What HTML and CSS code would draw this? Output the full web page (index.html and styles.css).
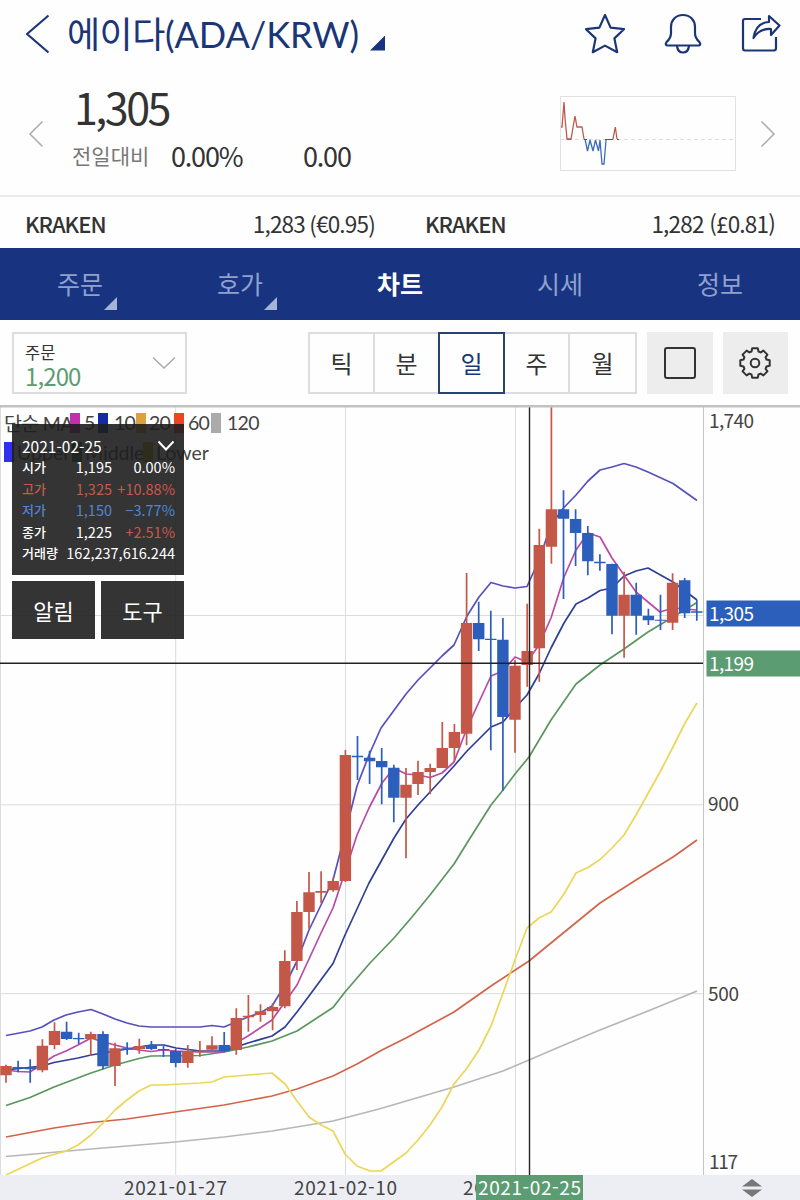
FILE: index.html
```html
<!DOCTYPE html>
<html lang="ko">
<head>
  <meta charset="UTF-8" />
  <meta name="viewport" content="width=device-width, initial-scale=1.0" />
  <title>에이다(ADA/KRW)</title>
  <link rel="stylesheet" href="styles.css">
</head>
<body>
  <header class="header">
    <svg class="back" width="26" height="40" viewBox="0 0 26 40"><path d="M23.500 1.500 L2 20 L23.500 38.500" /></svg>
    <h1>에이다<span class="pair">(ADA/KRW)</span></h1>
    <i class="corner"></i>
    <div class="header-icons">
      <svg width="42" height="42" viewBox="0 0 42 42"><path d="M21 2 L26.600 14.600 L40 16.200 L30.400 25.400 L33.200 39.200 L21 32.600 L8.800 39.200 L11.600 25.400 L2 16.200 L15.400 14.600 Z" /></svg>
      <svg width="42" height="42" viewBox="0 0 42 42"><path d="M21 2 C13.500 2 9 7.500 9 14 V20 C9 25 7 27 4.500 29.200 C3 31 4 32.500 5.500 32.500 H36.500 C38 32.500 39 31 37.500 29.200 C35 27 33 25 33 20 V14 C33 7.500 28.500 2 21 2 Z M15 33 C15.500 37 18 39.500 21 39.500 C24 39.500 26.500 37 27 33" /></svg>
      <svg width="42" height="42" viewBox="0 0 42 42"><path d="M21 6 H5 Q3 6 3 8 V35 Q3 37.500 5 37.500 H34 Q36 37.500 36 35 V24 M13.500 25 C15 15 20 9.500 29 9 V3 L39.500 12.500 L31 22 V16 C23 15.500 17.500 18.500 13.500 25 Z" /></svg>
    </div>
  </header>

  <section class="summary">
    <svg class="arrow" width="16" height="28" viewBox="0 0 16 28"><path d="M14.500 1.500 L2 14 L14.500 26.500" /></svg>
    <div class="price">
      <div class="price-now">1,305</div>
      <div class="price-diff">
        <span class="diff-label">전일대비</span>
        <span class="diff-rate">0.00%</span>
        <span class="diff-value">0.00</span>
      </div>
    </div>
    <svg class="spark" width="176" height="75" viewBox="0 0 176 75">
      <rect x="0.500" y="0.500" width="175" height="74" />
      <path class="spark-base" d="M1 43.500 H175" />
      <path class="spark-flat" d="M7 43.500 H11 M24 43.500 H27 M45 43.500 H53 M57 43.500 H59" />
      <path class="spark-up" d="M1 31 H2 L4 6 L5 22 L7 43 H11 L15 20 L17 31 H22 L24 43 M53 43 L55.300 31 L57 43" />
      <path class="spark-down" d="M25 43 L27.500 55 L30 44 L33 55 L35.500 44 L38.500 55 L40 44 L42 68 H44 L46 44" />
    </svg>
    <svg class="arrow" width="16" height="28" viewBox="0 0 16 28"><path d="M1.500 1.500 L14 14 L1.500 26.500" /></svg>
  </section>

  <section class="market">
    <b>KRAKEN</b><span>1,283 (€0.95)</span>
    <b>KRAKEN</b><span>1,282 (£0.81)</span>
  </section>

  <nav class="tabs">
    <a class="tab">주문<i></i></a>
    <a class="tab">호가<i></i></a>
    <a class="tab active">차트</a>
    <a class="tab">시세</a>
    <a class="tab">정보</a>
  </nav>

  <section class="toolbar">
    <div class="order">
      <div>
        <div class="order-label">주문</div>
        <div class="order-value">1,200</div>
      </div>
      <svg width="24" height="14" viewBox="0 0 24 14"><path d="M1 1.500 L12 12 L23 1.500" /></svg>
    </div>
    <div class="periods">
      <span>틱</span>
      <span>분</span>
      <span class="selected">일</span>
      <span>주</span>
      <span>월</span>
    </div>
    <div class="tool">
      <svg width="34" height="34" viewBox="0 0 34 34"><rect x="2" y="2" width="30" height="30" rx="2" /></svg>
    </div>
    <div class="tool">
      <svg width="34" height="34" viewBox="0 0 34 34">
        <path d="M13.500 5.500 L14.200 2.300 H19.800 L20.500 5.500 L22.700 6.400 L25.400 4.600 L29.400 8.600 L27.600 11.300 L28.500 13.500 L31.700 14.200 V19.800 L28.500 20.500 L27.600 22.700 L29.400 25.400 L25.400 29.400 L22.700 27.600 L20.500 28.500 L19.800 31.700 H14.200 L13.500 28.500 L11.300 27.600 L8.600 29.400 L4.600 25.400 L6.400 22.700 L5.500 20.500 L2.300 19.800 V14.200 L5.500 13.500 L6.400 11.300 L4.600 8.600 L8.600 4.600 L11.300 6.400 Z" />
        <circle cx="17" cy="17" r="4.300" />
      </svg>
    </div>
  </section>

  <main class="chart">
    <svg class="plot" width="800" height="795" viewBox="0 405 800 795">
      <!-- grid -->
      <path class="grid" d="M0.500 407 V1175 M175.700 407 V1175 M345.500 407 V1175 M515.500 407 V1175 M0 615.500 H703 M0 804.800 H703 M0 993.700 H703" />
      <path class="axis" d="M703.500 407 V1175" />

      <!-- moving averages and bands -->
      <polyline class="line ma120" points="6,1156.500 91,1149 175,1142 224,1137 272,1131 333,1121 379,1109 454,1087 503,1071 529,1060 564,1045 600,1030 648,1011 697,991" />
      <polyline class="line ma60" points="6,1137 54,1128 91,1122.500 127,1119 175,1112 224,1105 272,1096 297,1089 333,1076 357,1064 382,1050 406,1038 430,1025 454,1012 491,986 529,961 551,943 600,903 636,880 673,857 697,840" />
      <polyline class="line lower" points="6,1175 42,1158 66,1151 78,1145 91,1135 103,1123 115,1110 127,1100 139,1091 151,1085 163,1085 200,1083 212,1082 224,1077 248,1075 272,1073 285,1084 297,1101 309,1117 321,1125 333,1131 345,1154 357,1166 370,1171 381,1171 406,1153 418,1140 430,1125 442,1107 454,1084 467,1068 479,1050 491,1026 503,993 515,960 527,928 539,918 551,912 564,894 576,873 588,867.500 600,859.500 612,848 624,835 636,815 660,772 673,747 685,723 697,703" />
      <polyline class="line ma20" points="6,1105.500 30,1097.500 54,1087 91,1073 115,1065 139,1058.500 151,1056 200,1055.500 224,1052 248,1047 272,1041 297,1031 333,1007.500 345,992 370,963 394,938 412,917 430,895 454,864 467,843 491,805 503,790 515,774 529,757 551,720 576,684 600,665 624,649 648,632 673,617 697,602.500" />
      <polyline class="line ma10" points="6,1070 42,1066 54,1062.500 78,1058 91,1055 127,1049 151,1045 164,1045 176,1048 200,1051 224,1051 236,1047 248,1043 272,1036 285,1027 297,1012 309,996 333,963.500 345,935 369,883 394,838 406,819 418,805 454,766 467,751 479,739 491,727 503,722 515,708 527,695 539,674 551,648 564,623 576,604 588,598 600,590.500 612,588 624,576 636,571 648,568 673,582 697,600" />
      <polyline class="line ma5" points="6,1070 18,1071.500 30,1072 42,1064 54,1056 66,1051 78,1045 91,1038 103,1042 115,1045 127,1048 139,1050 151,1051.500 163,1050 176,1051 200,1052 224,1052 236,1043 248,1036 272,1020 285,1002 297,985 321,933 333,908 345,872 357,835 369,808 382,783 394,768 406,774 418,775 430,777.500 442,773 454,762 467,728 479,702 491,676 503,671 515,657 527,662 539,645 551,618 564,577 576,550 588,533 600,537 612,558 636,592 660,612 673,608 697,610" />
      <polyline class="line upper" points="6,1035.500 30,1031 42,1027 54,1020 66,1015 78,1012 91,1009.500 103,1014 115,1019 127,1023 139,1026 151,1027 200,1027 212,1025.500 224,1027 236,1022 248,1017 260,1013 272,1006 285,985 297,961 309,930 321,905 333,880 345,834 357,786 369,755 381,728 406,694 418,680 430,668 442,656 454,645 467,616 479,597 491,582.500 503,586 515,588 527,586.500 539,560 551,525 563.500,508 576,495 588,481 600,470 612,467 624,463.500 636,467 648,472 673,483.500 697,500.500" />

      <!-- candles: wicks, then bodies -->
      <path class="wick rise" d="M6 1064.700 V1082.700 M42.400 1039.300 V1072.300 M54.500 1022.300 V1049.300 M90.800 1031.700 V1056 M115 1042.700 V1086 M139.300 1038.700 V1053.700 M187.800 1045 V1067.700 M199.900 1041 V1056.700 M212 1036.300 V1050 M236.300 1008.300 V1054.700 M248.400 995 V1031.700 M260.500 1004.300 V1021.700 M272.600 1003.300 V1030.300 M284.800 950.300 V1008.300 M296.900 901 V970 M309 872 V928.700 M321.100 871.300 V903.300 M333.200 877.700 V891.700 M345.400 750 V882 M406 768 V858.300 M418 760.700 V795 M430.200 763.700 V794.300 M442.300 722 V768 M454.400 724 V761.300 M466.600 573 V745.300 M515 660 V752.700 M527.200 603.700 V686.700 M539.300 528.700 V681.700 M551.400 407 V563.700 M624.100 571.700 V657.700 M672.600 573.300 V630" />
      <path class="wick fall" d="M18.100 1060.700 V1072.300 M30.200 1059.300 V1082.700 M66.600 1021.700 V1040 M78.700 1032.700 V1044 M103 1031.300 V1069.300 M127.200 1042.300 V1054.700 M151.400 1041 V1050 M163.500 1046 V1057 M175.700 1049 V1067.300 M224.200 1032 V1052 M357.500 736 V780 M369.600 750.700 V784 M381.700 748 V804.300 M393.800 764.700 V822.300 M478.700 601.700 V651 M490.800 610.700 V750.300 M502.900 618 V790.700 M563.500 490.300 V599 M575.600 509.300 V566 M587.800 526 V575.300 M599.900 554.300 V570.700 M612 563.700 V634.300 M636.200 582.700 V634.700 M648.400 608.700 V625 M660.500 594.700 V630 M684.700 578 V618 M696.800 600 V620.700" />
      <path class="body rise" d="M6 1066 V1075.300 M42.400 1045.700 V1070.300 M54.500 1031 V1045 M90.800 1034 V1039 M115 1048.300 V1066 M139.300 1046 V1049 M187.800 1051 V1063 M199.900 1050.700 V1052.300 M212 1045.300 V1049.700 M236.300 1018 V1050 M248.400 1015.700 V1017.300 M260.500 1011.300 V1015 M272.600 1007 V1011.300 M284.800 961 V1006.300 M296.900 912 V961 M309 892.300 V912 M321.100 891 V892.700 M333.200 881 V890.300 M345.400 755 V881 M406 784.700 V797.700 M418 772 V784 M430.200 768 V772 M442.300 748 V768 M454.400 732 V748 M466.600 623 V733.700 M515 665.700 V719.700 M527.200 651 V665 M539.300 545 V648.300 M551.400 509.300 V546.700 M624.100 594.700 V615.700 M672.600 582.700 V622.700" />
      <path class="body fall" d="M18.100 1067 V1068.700 M30.200 1067.300 V1069.300 M66.600 1031.700 V1039 M78.700 1038 V1039.300 M103 1034 V1066.300 M127.200 1048.300 V1049.700 M151.400 1045 V1049 M163.500 1049 V1050 M175.700 1051 V1063 M224.200 1045 V1051.300 M357.500 755.700 V757.300 M369.600 757.700 V761.300 M381.700 761 V767.300 M393.800 767.700 V797.700 M478.700 623 V639.300 M490.800 638.700 V640 M502.900 639.700 V717 M563.500 509.300 V518.700 M575.600 519 V533 M587.800 533 V561.300 M599.900 561.700 V563.300 M612 564 V615.700 M636.200 594.700 V615.700 M648.400 615.700 V620.300 M660.500 619.700 V620.700 M684.700 580.300 V613.300 M696.800 611.300 V612.700" />

      <!-- crosshair -->
      <path class="cross" d="M529.500 407 V1175 M0 663.300 H703" />

      <!-- price axis -->
      <text x="709" y="427.500" textLength="45">1,740</text>
      <text x="708" y="811" textLength="31">900</text>
      <text x="708" y="1000.500" textLength="31">500</text>
      <text x="709" y="1169" textLength="29">117</text>
      <rect x="706.500" y="600.500" width="93.500" height="26" fill="#2c5ebc" />
      <text class="on" x="709" y="620.500" textLength="45">1,305</text>
      <rect x="706.500" y="650.500" width="93.500" height="26" fill="#5c9c72" />
      <text class="on" x="709" y="670.500" textLength="45">1,199</text>

      <!-- date axis -->
      <rect x="0" y="1175" width="800" height="25" fill="#edeef3" />
      <text x="124" y="1195" textLength="103">2021-01-27</text>
      <text x="294" y="1195" textLength="103">2021-02-10</text>
      <text x="463" y="1195" textLength="103">2021-02-24</text>
      <rect x="476" y="1175" width="107" height="25" fill="#5c9c72" />
      <text class="on" x="478" y="1195" textLength="103">2021-02-25</text>
      <path d="M742 1186.500 L752 1179 L762 1186.500 Z M742 1189.500 L752 1197 L762 1189.500 Z" fill="#777" />
      <rect x="0" y="405" width="800" height="2.500" fill="#c2c2c2" />
    </svg>

    <div class="legend">
      <div class="legend-row">
        <span>단순 MA</span>
        <i class="c-ma5"></i><span>5</span>
        <i class="c-ma10"></i><span>10</span>
        <i class="c-ma20"></i><span>20</span>
        <i class="c-ma60"></i><span>60</span>
        <i class="c-ma120"></i><span>120</span>
      </div>
      <div class="legend-row bands">
        <i class="c-upper"></i><span>Upper</span>
        <i class="c-middle"></i><span>Middle</span>
        <i class="c-lower"></i><span>Lower</span>
      </div>
    </div>

    <div class="panel">
      <div class="panel-head">
        <span>2021-02-25</span>
        <svg width="18" height="12" viewBox="0 0 18 12"><path d="M1.500 1.500 L9 9.500 L16.500 1.500" /></svg>
      </div>
      <div class="quote"><b>시가</b><span>1,195</span><span>0.00%</span></div>
      <div class="quote red"><b>고가</b><span>1,325</span><span>+10.88%</span></div>
      <div class="quote blue"><b>저가</b><span>1,150</span><span>−3.77%</span></div>
      <div class="quote"><b>종가</b><span>1,225</span><span class="red">+2.51%</span></div>
      <div class="quote volume"><b>거래량</b><span>162,237,616.244</span></div>
    </div>
    <div class="actions">
      <button>알림</button>
      <button>도구</button>
    </div>
  </main>
</body>
</html>
```
FILE: styles.css
```css
* {
  box-sizing: border-box;
}

body {
  margin: 0;
  width: 800px;
  height: 1200px;
  overflow: hidden;
  background: #fefefe;
  color: #333;
  font-family: "Noto Sans CJK KR", sans-serif;
}

svg {
  display: block;
  flex: none;
}

/* header */
.header {
  display: flex;
  align-items: center;
  height: 72px;
  padding: 0 18px 4px 25px;
}

.header svg {
  fill: none;
  stroke: #1b3677;
  stroke-width: 2.2;
  stroke-linejoin: round;
}

h1 {
  margin: 0 0 0 16px;
  width: 293px;
  font-family: Lato, "Noto Sans CJK KR", sans-serif;
  font-size: 36px;
  line-height: 50px;
  font-weight: 400;
  letter-spacing: -0.500px;
  white-space: nowrap;
  color: #1b3677;
}

.pair {
  letter-spacing: 0;
}

.corner {
  width: 15px;
  height: 15px;
  margin: 18px 0 0 10px;
  background: #183480;
  clip-path: polygon(100% 0, 100% 100%, 0 100%);
}

.header-icons {
  display: flex;
  gap: 36px;
  margin-left: auto;
}

/* price */
.summary {
  display: flex;
  align-items: center;
  height: 125px;
  padding: 0 24px 0 28px;
  border-bottom: 2px solid #ececec;
}

.arrow {
  fill: none;
  stroke: #aaa;
  stroke-width: 1.5;
}

.price {
  width: 516px;
  height: 100%;
  padding: 8px 0 0 28px;
}

.price-now {
  height: 52px;
  padding-left: 2px;
  font-size: 43px;
  line-height: 52px;
  letter-spacing: -2.500px;
}

.price-diff {
  display: flex;
  align-items: center;
  height: 46px;
  font-size: 27px;
  letter-spacing: -1.200px;
}

.diff-label {
  width: 99px;
  font-size: 21px;
  letter-spacing: 0;
  color: #777;
}

.diff-rate {
  width: 132px;
}

.spark {
  margin-right: 24px;
  fill: none;
}

.spark rect {
  stroke: #e2e2e2;
}

.spark-base {
  stroke: #ddd;
  stroke-dasharray: 4 3;
}

.spark-flat {
  stroke: #555;
}

.spark-up {
  stroke: #c0594d;
  stroke-width: 1.3;
}

.spark-down {
  stroke: #3d6db8;
  stroke-width: 1.3;
}

.market {
  display: grid;
  grid-template-columns: 150px 200px 200px 200px;
  height: 51px;
  padding-left: 25px;
  align-items: center;
  font-size: 22.500px;
  letter-spacing: -0.800px;
}

.market b {
  font-weight: 500;
  font-size: 22px;
  letter-spacing: -1px;
}

.market span {
  text-align: right;
}

.market b:nth-of-type(2) {
  padding-left: 50px;
}

/* tabs */
.tabs {
  display: grid;
  grid-template-columns: repeat(5, 1fr);
  height: 72px;
  background: #183480;
}

.tab {
  position: relative;
  line-height: 70px;
  text-align: center;
  font-size: 25px;
  color: #8fa0cf;
}

.tab.active {
  color: #fff;
  font-weight: 700;
}

.tab i {
  position: absolute;
  right: 43px;
  bottom: 10px;
  width: 13px;
  height: 13px;
  background: #a6b4d8;
  clip-path: polygon(100% 0, 100% 100%, 0 100%);
}

/* toolbar */
.toolbar {
  display: flex;
  height: 85px;
  padding: 12px 12px 11px;
}

.order {
  display: flex;
  justify-content: space-between;
  align-items: center;
  width: 175px;
  height: 62px;
  padding: 0 9px 0 11px;
  border: 2px solid #ddd;
}

.order svg {
  fill: none;
  stroke: #aaa;
  stroke-width: 1.5;
}

.order-label {
  font-size: 16.500px;
  line-height: 22px;
  padding-top: 3px;
}

.order-value {
  font-size: 24px;
  line-height: 25px;
  letter-spacing: -0.900px;
  color: #5c9c72;
}

.periods {
  display: grid;
  grid-template-columns: repeat(5, 1fr);
  width: 329px;
  height: 62px;
  margin-left: 121px;
  border: 2px solid #ddd;
}

.periods span {
  line-height: 58px;
  text-align: center;
  font-size: 24px;
  border-right: 2px solid #ddd;
}

.periods span:last-child {
  border-right: 0;
}

.periods .selected {
  margin: -2px 0 -2px -2px;
  line-height: 58px;
  border: 2px solid #2a4270;
  color: #1b3677;
}

.tool {
  display: flex;
  align-items: center;
  justify-content: center;
  width: 65.500px;
  height: 62px;
  margin-left: 10px;
  background: #ededed;
}

.tool svg {
  fill: none;
  stroke: #333;
  stroke-width: 2;
  stroke-linejoin: round;
}

/* chart */
.chart {
  position: relative;
  height: 795px;
}

.plot {
  fill: none;
}

.grid {
  stroke: #dcdcdc;
}

.axis {
  stroke: #c4c4c4;
}

.line {
  stroke-width: 1.7;
  stroke-linejoin: round;
}

.upper {
  stroke: #5750bd;
}

.ma5 {
  stroke: #b94aa5;
}

.ma10 {
  stroke: #2f3f96;
}

.ma20 {
  stroke: #5a965e;
}

.lower {
  stroke: #ecd658;
}

.ma60 {
  stroke: #d2644a;
}

.ma120 {
  stroke: #b7b7b7;
}

.wick {
  stroke-width: 1.7;
}

.body {
  stroke-width: 11.4;
}

.rise {
  stroke: #c35849;
}

.fall {
  stroke: #2c5ebc;
}

.cross {
  stroke: #222;
  stroke-width: 1.4;
}

.plot text {
  fill: #444;
  font-size: 19px;
}

.plot text.on {
  fill: #fff;
}

.legend {
  position: absolute;
  top: 3px;
  left: 4px;
  font-family: Lato, "Noto Sans CJK KR", sans-serif;
  font-size: 19.500px;
  color: #444;
}

.legend-row {
  display: grid;
  grid-template-columns: 66px 14px 14px 16px 22px 13px 25px 14px 23px 16px 40px;
  align-items: center;
  height: 26px;
  letter-spacing: -0.700px;
}

.legend-row i {
  width: 10px;
  height: 20px;
}

.legend-row span {
  white-space: nowrap;
}

.legend-row.bands {
  grid-template-columns: 13px 55px 13px 58px 13px 60px;
  margin-top: 5px;
  letter-spacing: 0;
}

.c-ma5 {
  background: #c62fac;
}

.c-ma10 {
  background: #1429a6;
}

.c-ma20 {
  background: #dda03a;
}

.c-ma60 {
  background: #ee4520;
}

.c-ma120 {
  background: #aaa;
}

.c-upper {
  background: #3030ef;
}

.c-middle {
  background: #187040;
}

.c-lower {
  background: #d5a800;
}

.panel {
  position: absolute;
  top: 19px;
  left: 12px;
  width: 172px;
  height: 151px;
  padding: 11px 9px 0 10px;
  background: rgba(30, 30, 30, 0.9);
  color: #fff;
  font-size: 14.500px;
}

.panel-head {
  display: flex;
  justify-content: space-between;
  align-items: center;
  height: 21px;
  font-size: 15.500px;
}

.panel-head svg {
  fill: none;
  stroke: #fff;
  stroke-width: 2;
}

.quote {
  display: grid;
  grid-template-columns: 38px 52px 1fr;
  height: 21.500px;
  line-height: 21.500px;
  text-align: right;
  white-space: nowrap;
}

.quote b {
  font-size: 13px;
  font-weight: 500;
  text-align: left;
}

.volume {
  grid-template-columns: 38px 1fr;
}

.red {
  color: #c8574c;
}

.blue {
  color: #4e86d6;
}

.actions {
  position: absolute;
  top: 176px;
  left: 12px;
  display: flex;
  gap: 6px;
}

.actions button {
  width: 83px;
  height: 58px;
  padding: 0;
  border: 0;
  background: rgba(30, 30, 30, 0.9);
  color: #fff;
  font: 22px "Noto Sans CJK KR", sans-serif;
}
```
